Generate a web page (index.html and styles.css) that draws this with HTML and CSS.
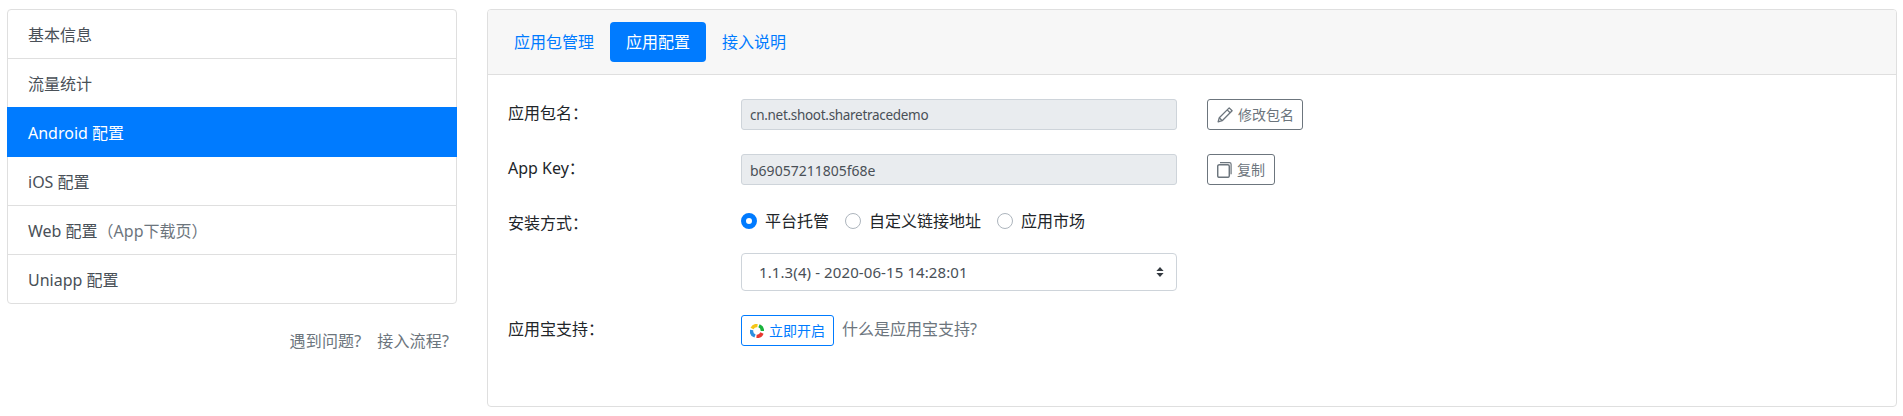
FILE: index.html
```html
<!DOCTYPE html>
<html lang="zh-CN">
<head>
<meta charset="utf-8">
<title>Android 配置</title>
<link rel="stylesheet" href="styles.css">
</head>
<body>
<div class="page">
  <aside class="side">
    <ul class="menu">
      <li class="menu-item">基本信息</li>
      <li class="menu-item">流量统计</li>
      <li class="menu-item active">Android 配置</li>
      <li class="menu-item">iOS 配置</li>
      <li class="menu-item">Web 配置<span class="muted">（App下载页）</span></li>
      <li class="menu-item">Uniapp 配置</li>
    </ul>
    <div class="help"><a>遇到问题?</a><a>接入流程?</a></div>
  </aside>
  <main class="card">
    <nav class="card-head">
      <a class="pill">应用包管理</a>
      <a class="pill on">应用配置</a>
      <a class="pill">接入说明</a>
    </nav>
    <div class="card-body">
      <div class="row">
        <div class="label">应用包名：</div>
        <div class="field"><div class="input input-tight">cn.net.shoot.sharetracedemo</div></div>
        <button class="btn">
          <svg class="ico" viewBox="0 0 16 16" fill="none" stroke="currentColor" stroke-width="1.3" stroke-linejoin="round"><path d="M12.2.9l2.9 2.9L5.2 13.7l-4.1 1.2 1.2-4.1z"/><path d="M10.2 2.9l2.9 2.9M2.3 10.8l2.9 2.9"/></svg>
          修改包名
        </button>
      </div>
      <div class="row">
        <div class="label">App Key：</div>
        <div class="field"><div class="input">b69057211805f68e</div></div>
        <button class="btn btn-copy">
          <svg class="ico ico-copy" viewBox="0 0 15 16" fill="none" stroke="currentColor"><rect x="0.7" y="2.7" width="11.6" height="12.6" rx="1.6" stroke-width="1.5"/><path d="M3 .7h9.5a1.6 1.6 0 0 1 1.6 1.6v10" stroke-width="1.2"/></svg>
          复制
        </button>
      </div>
      <div class="row row-radio">
        <div class="label">安装方式：</div>
        <div class="radios">
          <span class="radio"><i class="dot dot-on"></i>平台托管</span>
          <span class="radio"><i class="dot"></i>自定义链接地址</span>
          <span class="radio"><i class="dot"></i>应用市场</span>
        </div>
      </div>
      <div class="row row-select">
        <div class="label"></div>
        <div class="select">1.1.3(4) - 2020-06-15 14:28:01
          <svg class="caret" viewBox="0 0 8 10" fill="#343a40"><path d="M4 0L7.6 4H.4zM4 10L.4 6h7.2z"/></svg>
        </div>
      </div>
      <div class="row row-last">
        <div class="label">应用宝支持：</div>
        <button class="btn btn-open">
          <svg class="logo" viewBox="0 0 14 14" fill="none" stroke-width="3.4"><path d="M2 4.5A5.5 5.5 0 0 1 7.5 1.6" stroke="#f5c518"/><path d="M9 1.8A5.5 5.5 0 0 1 12.4 7" stroke="#19b33c"/><path d="M12 9A5.5 5.5 0 0 1 6.5 12.4" stroke="#e8382f"/><path d="M5 12A5.5 5.5 0 0 1 1.6 6" stroke="#2c8fe0"/></svg>
          立即开启
        </button>
        <a class="what">什么是应用宝支持?</a>
      </div>
    </div>
  </main>
</div>
</body>
</html>
```
FILE: styles.css
```css
* { box-sizing: border-box; }
html, body { margin: 0; background: #fff; }
body {
  font-family: "Noto Sans", "Noto Sans CJK SC", sans-serif;
  font-size: 16px;
  line-height: 24px;
  color: #212529;
}
.page {
  display: flex;
  align-items: flex-start;
  gap: 30px;
  padding: 9px 6px 0 7px;
}
.side { flex: 0 0 450px; }
.menu {
  list-style: none;
  margin: 0;
  padding: 0;
  border: 1px solid #dfdfdf;
  border-radius: 4px;
  height: 295px;
}
.menu-item {
  height: 49px;
  padding: 13px 20px 11px;
  color: #495057;
  border-bottom: 1px solid #dfdfdf;
}
.menu-item:last-child { border-bottom: 0; height: 48px; }
.menu-item.active {
  background: #007bff;
  color: #fff;
  margin: -1px -1px 0;
  height: 50px;
  padding: 14px 21px 11px;
  border-bottom: 0;
}
.muted { color: #6c757d; }
.help {
  display: flex;
  justify-content: flex-end;
  gap: 16px;
  margin-top: 25px;
  padding-right: 8px;
  color: #6c757d;
  letter-spacing: .15px;
}
.card {
  flex: 1;
  height: 398px;
  border: 1px solid #dfdfdf;
  border-radius: 4px;
}
.card-head {
  display: flex;
  height: 65px;
  padding: 12px 10px;
  background: #f7f7f7;
  border-bottom: 1px solid #dfdfdf;
  border-radius: 3px 3px 0 0;
}
.pill {
  height: 40px;
  padding: 8px 16px;
  color: #007bff;
  border-radius: 4px;
}
.pill.on { background: #007bff; color: #fff; }
.card-body { padding: 24px 20px 0; }
.row {
  display: flex;
  align-items: flex-start;
  margin-bottom: 24px;
}
.row-radio { margin-bottom: 18px; }
.label {
  flex: 0 0 233px;
  padding-top: 2px;
}
.field { flex: 0 0 436px; margin-right: 30px; }
.input {
  height: 31px;
  padding: 5px 8px 3px;
  font-size: 14px;
  line-height: 21px;
  color: #495057;
  background: #e9ecef;
  border: 1px solid #ced4da;
  border-radius: 3px;
}
.input-tight { font-size: 13.5px; letter-spacing: -.3px; }
.btn {
  display: flex;
  align-items: center;
  height: 31px;
  padding: 0 8px 0 9px;
  font: inherit;
  font-size: 14px;
  line-height: 21px;
  color: #6c757d;
  background: #fff;
  border: 1px solid #6c757d;
  border-radius: 3px;
}
.ico { width: 16px; height: 16px; margin-right: 5px; flex: none; }
.ico-copy { width: 15px; margin-right: 5px; }
.btn-copy { padding-right: 9px; }
.radios { display: flex; gap: 16px; }
.radio { display: flex; align-items: center; }
.dot {
  width: 16px;
  height: 16px;
  margin-right: 8px;
  background: #fff;
  border: 1px solid #adb5bd;
  border-radius: 50%;
}
.dot-on { border: 5px solid #007bff; }
.select {
  position: relative;
  flex: 0 0 436px;
  height: 38px;
  padding: 6px 12px 6px 17px;
  color: #495057;
  font-size: 15px;
  letter-spacing: .1px;
  border: 1px solid #ced4da;
  border-radius: 4px;
}
.caret {
  position: absolute;
  right: 12px;
  top: 13px;
  width: 8px;
  height: 10px;
}
.btn-open {
  color: #007bff;
  border-color: #007bff;
  padding: 0 8px 0 8px;
}
.logo { width: 14px; height: 14px; margin-right: 5px; flex: none; }
.what { margin-left: 8px; padding-top: 2px; color: #6c757d; }
```
